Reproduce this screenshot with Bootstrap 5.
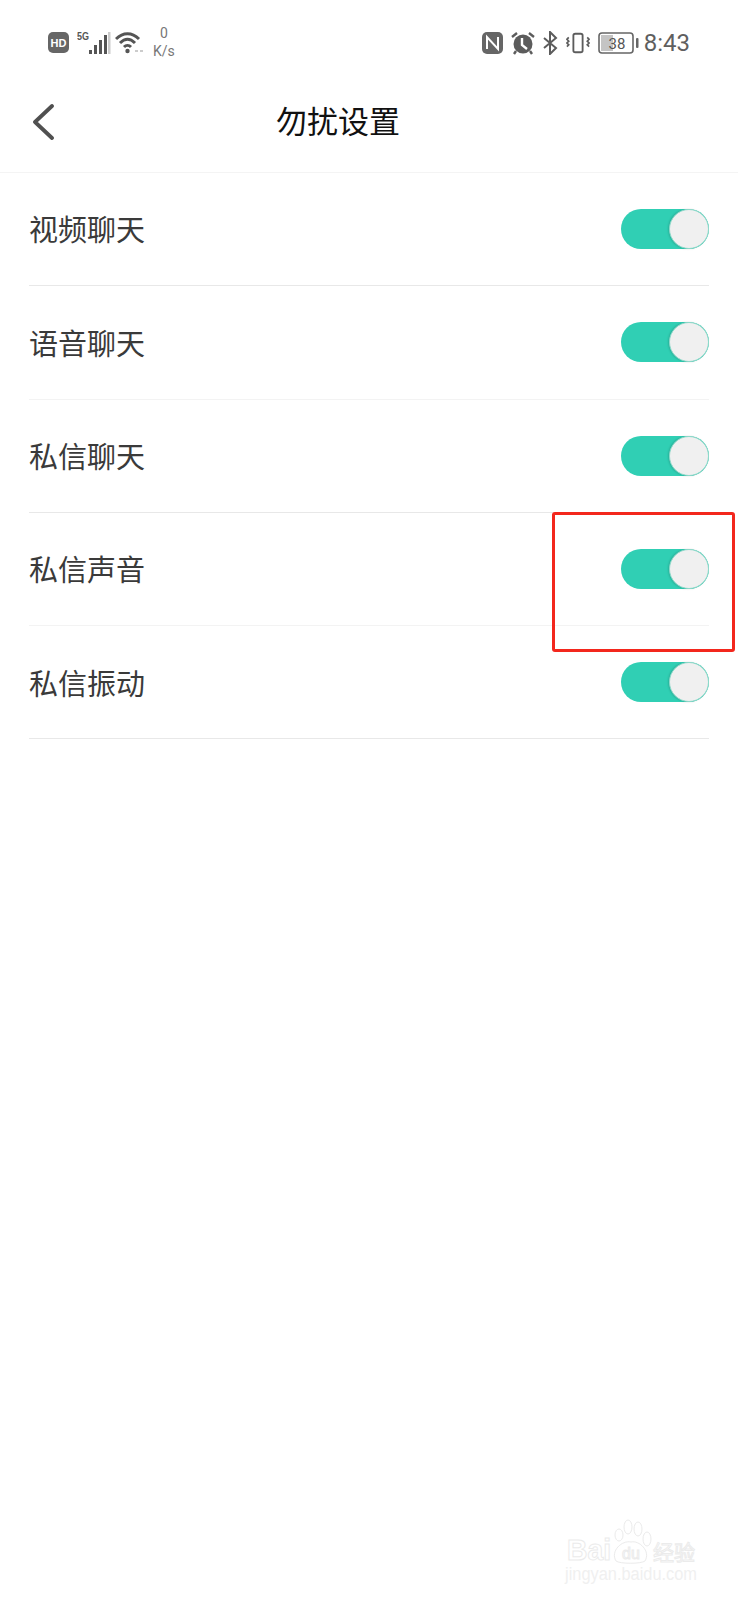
<!DOCTYPE html>
<html lang="zh-CN">
<head>
  <meta charset="UTF-8" />
  <meta name="viewport" content="width=device-width, initial-scale=1.0"/>
  <title>勿扰设置</title>
  <link href="https://cdn.jsdelivr.net/npm/bootstrap@5.3.0/dist/css/bootstrap.min.css" rel="stylesheet" />
  <style>
    body {
      background: #fff;
      font-family: "Noto Sans CJK SC", "Liberation Sans", sans-serif;
      width: 738px;
      height: 1600px;
      overflow: hidden;
      position: relative;
    }
    .status-bar {
      height: 80px;
      padding: 5px 48px 0 48px;
      color: #666;
    }
    .net-speed {
      font-family: "Roboto", sans-serif;
      font-size: 14px;
      line-height: 18px;
      color: #777;
      margin-left: 8px;
      margin-top: -2px;
    }
    .clock {
      font-family: "Roboto", sans-serif;
      font-size: 24px;
      color: #5f5f5f;
    }
    .batt-text {
      font-family: "Roboto", sans-serif;
      font-size: 15px;
      fill: #555;
    }
    .top-bar {
      height: 93px;
      border-bottom: 1px solid #f4f4f4;
      position: relative;
    }
    .back-btn {
      margin-left: 32px;
      margin-top: -8px;
    }
    .page-title {
      position: absolute;
      left: 276px;
      top: 18px;
      font-size: 31px;
      line-height: 44px;
      color: #111;
      margin: 0;
      font-weight: 400;
    }
    .set-list {
      margin: 0 29px;
    }
    .set-row {
      height: 113.3px;
      border-bottom: 1px solid #e8e8e8;
    }
    .set-row.faint {
      border-bottom-color: #f3f3f3;
    }
    .set-label {
      font-size: 29px;
      color: #3a3a3a;
    }
    .toggle-pill {
      width: 88px;
      height: 40px;
      border-radius: 20px;
      background: #30cfb4;
      position: relative;
    }
    .toggle-knob {
      position: absolute;
      right: 0;
      top: 0;
      width: 40px;
      height: 40px;
      border-radius: 50%;
      background: #f0f0f0;
      border: 1px solid #8fd9ca;
      box-shadow: -1px 0 2px rgba(0, 0, 0, .15);
    }
    .red-box {
      position: absolute;
      left: 552px;
      top: 512px;
      width: 183px;
      height: 140px;
      border: 3px solid #f3271d;
      border-radius: 3px;
    }
    .watermark {
      position: absolute;
      left: 564px;
      top: 1518px;
      line-height: 1;
    }
    .wm-text {
      font-family: "Liberation Sans", sans-serif;
      fill: #fff;
      stroke: #ebebeb;
      stroke-width: 1;
    }
  </style>
</head>
<body>
  <div class="status-bar d-flex align-items-center">
    <svg width="21" height="21" viewBox="0 0 21 21"><rect width="21" height="21" rx="5" fill="#666"/><text x="10.5" y="15" text-anchor="middle" font-family="Liberation Sans" font-weight="700" font-size="11" fill="#fff">HD</text></svg>
    <svg class="ms-2" width="34" height="26" viewBox="0 0 34 26">
      <text x="0" y="10" font-family="Liberation Sans" font-weight="700" font-size="11" textLength="12" lengthAdjust="spacingAndGlyphs" fill="#555">5G</text>
      <rect x="12" y="20" width="3" height="4" fill="#555"/>
      <rect x="17" y="15" width="3" height="9" fill="#555"/>
      <rect x="22" y="10" width="3" height="14" fill="#555"/>
      <rect x="27" y="5" width="3" height="19" fill="#555"/>
      <rect x="31" y="2" width="2.5" height="22" fill="#ccc"/>
    </svg>
    <svg class="ms-1" width="30" height="24" viewBox="0 0 30 24" fill="none" stroke="#555" stroke-width="3">
      <path d="M1 8C8 1 17 1 24 8"/>
      <path d="M5 12C10 7 15 7 20 12"/>
      <path d="M9 16C11 14 14 14 16 16"/>
      <circle cx="12.5" cy="20" r="2.2" fill="#555" stroke="none"/>
      <path d="M20 20h3M25 20h3" stroke="#ccc" stroke-width="2"/>
    </svg>
    <div class="net-speed text-center">0<br>K/s</div>
    <div class="ms-auto d-flex align-items-center gap-1">
      <svg width="21" height="22" viewBox="0 0 21 22"><rect width="21" height="22" rx="5" fill="#666"/><path d="M5 17V5l11 12V5" fill="none" stroke="#fff" stroke-width="2"/></svg>
      <svg class="ms-1" width="24" height="24" viewBox="0 0 24 24">
        <circle cx="12" cy="13" r="9.5" fill="#5c5c5c"/>
        <path d="M11 7v7l5 4" fill="none" stroke="#fff" stroke-width="2.4"/>
        <path d="M1 6l5-4M23 6l-5-4M5 20l-2 3M19 20l2 3" stroke="#5c5c5c" stroke-width="2.4"/>
      </svg>
      <svg class="ms-1" width="15" height="24" viewBox="0 0 15 24" fill="none" stroke="#5c5c5c" stroke-width="2"><path d="M1 7l12 10-6 6V1l6 6L1 17"/></svg>
      <svg class="ms-1" width="24" height="22" viewBox="0 0 26 22" fill="none" stroke="#5c5c5c" stroke-width="2">
        <rect x="8" y="1" width="10" height="20" rx="2"/>
        <path d="M3 5l-2 2 2 2-2 2 2 2-2 2M23 5l2 2-2 2 2 2-2 2 2 2" stroke-width="1.8"/>
      </svg>
      <svg class="ms-1" width="42" height="22" viewBox="0 0 42 22">
        <rect x="1" y="1" width="34" height="20" rx="3" fill="none" stroke="#666" stroke-width="1.6"/>
        <rect x="3" y="3" width="12" height="16" fill="#c4c4c4"/>
        <text class="batt-text" x="19" y="17" text-anchor="middle">38</text>
        <rect x="38" y="6" width="2.5" height="10" rx="1" fill="#666"/>
      </svg>
      <span class="clock">8:43</span>
    </div>
  </div>

  <div class="top-bar d-flex align-items-center">
    <svg class="back-btn" width="24" height="36" viewBox="0 0 24 36" fill="none" stroke="#505050" stroke-width="3.8" stroke-linecap="round" stroke-linejoin="round"><path d="M20 2L3 18l17 16"/></svg>
    <h1 class="page-title">勿扰设置</h1>
  </div>

  <div class="set-list">
    <div class="set-row d-flex align-items-center justify-content-between">
      <span class="set-label">视频聊天</span>
      <div class="toggle-pill"><div class="toggle-knob"></div></div>
    </div>
    <div class="set-row faint d-flex align-items-center justify-content-between">
      <span class="set-label">语音聊天</span>
      <div class="toggle-pill"><div class="toggle-knob"></div></div>
    </div>
    <div class="set-row d-flex align-items-center justify-content-between">
      <span class="set-label">私信聊天</span>
      <div class="toggle-pill"><div class="toggle-knob"></div></div>
    </div>
    <div class="set-row faint d-flex align-items-center justify-content-between">
      <span class="set-label">私信声音</span>
      <div class="toggle-pill"><div class="toggle-knob"></div></div>
    </div>
    <div class="set-row d-flex align-items-center justify-content-between">
      <span class="set-label">私信振动</span>
      <div class="toggle-pill"><div class="toggle-knob"></div></div>
    </div>
  </div>

  <div class="red-box"></div>

  <div class="watermark">
    <svg width="140" height="68" viewBox="0 0 140 68">
      <text class="wm-text" x="3" y="42" font-size="29" font-weight="700" textLength="44" lengthAdjust="spacingAndGlyphs">Bai</text>
      <path d="M52 43c-6-10 6-21 15-19 8-2 20 9 14 19-4 3-25 3-29 0z" fill="none" stroke="#ebebeb"/>
      <ellipse cx="55" cy="17" rx="4" ry="6" fill="none" stroke="#ebebeb"/>
      <ellipse cx="64" cy="9" rx="4" ry="7" fill="none" stroke="#ebebeb"/>
      <ellipse cx="74" cy="11" rx="4" ry="7" fill="none" stroke="#ebebeb"/>
      <ellipse cx="83" cy="21" rx="4" ry="7" fill="none" stroke="#ebebeb"/>
      <text class="wm-text" x="58" y="41" font-size="16">du</text>
      <text class="wm-text" x="89" y="42" font-size="21" font-family="Noto Sans CJK SC">经验</text>
      <text x="1" y="62" font-family="Liberation Sans" font-size="18" textLength="132" lengthAdjust="spacingAndGlyphs" fill="#f0f0f0">jingyan.baidu.com</text>
    </svg>
  </div>

  <script src="https://cdn.jsdelivr.net/npm/bootstrap@5.3.0/dist/js/bootstrap.bundle.min.js"></script>
</body>
</html>
